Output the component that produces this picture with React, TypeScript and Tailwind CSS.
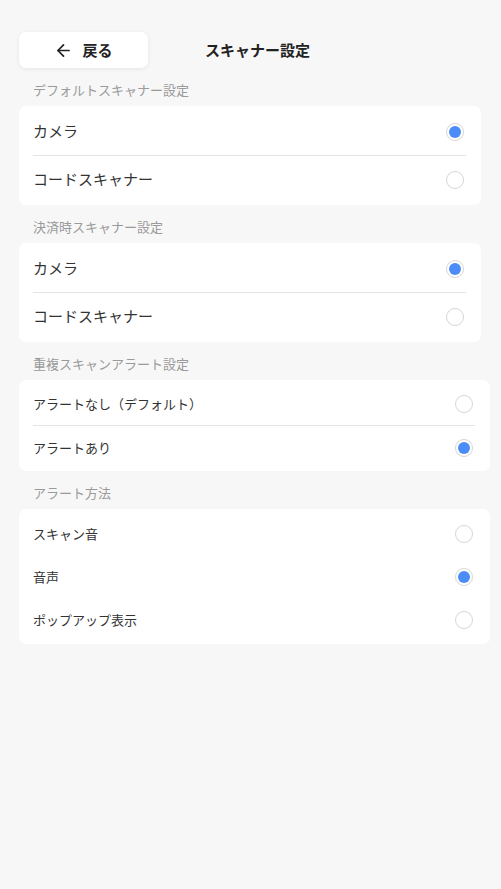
import React from "react";
import { ArrowLeft } from "lucide-react";

type Opt = { label: string; checked: boolean };

function Radio({ checked }: { checked: boolean }) {
  return (
    <div className="flex h-[18px] w-[18px] shrink-0 items-center justify-center rounded-full border border-[#d6d6d6] bg-white">
      {checked && <div className="h-[12px] w-[12px] rounded-full bg-[#4b8cf7]" />}
    </div>
  );
}

function Section({
  title,
  options,
  big,
  wide,
  dividers,
}: {
  title: string;
  options: Opt[];
  big: boolean;
  wide: boolean;
  dividers: boolean;
}) {
  return (
    <div className="flex flex-col">
      <div className="pt-[13px] pb-[7px] pl-[14px] text-[13px] leading-[18px] text-[#9a9a9a]">{title}</div>
      <div
        className={`flex flex-col rounded-[7px] bg-white ${dividers ? "py-[2px]" : "py-[3px]"} ${
          wide ? "w-[471px]" : "w-[462px]"
        }`}
      >
        {options.map((o, i) => (
          <React.Fragment key={o.label}>
            {i > 0 && dividers && <div className="ml-[14px] mr-[15px] h-px bg-[#e4e4e4]" />}
            <div
              className={`flex items-center justify-between pl-[14px] pr-[17px] ${
                big ? "h-[47px] text-[15px]" : "h-[43px] text-[13px]"
              } text-[#333]`}
            >
              <span>{o.label}</span>
              <Radio checked={o.checked} />
            </div>
          </React.Fragment>
        ))}
      </div>
    </div>
  );
}

export default function App() {
  return (
    <div
      className="min-h-[889px] w-full bg-[#f7f7f7] pl-[19px] pt-[32px]"
      style={{ fontFamily: '"Noto Sans CJK JP", "Noto Sans", sans-serif' }}
    >
      <div className="flex items-center">
        <button className="flex h-[36px] w-[129px] items-center justify-center gap-[9px] rounded-[7px] bg-white shadow-[0_1px_4px_rgba(0,0,0,0.08)]">
          <ArrowLeft size={19} strokeWidth={2.2} className="text-[#222]" />
          <span className="text-[15px] font-bold text-[#222]">戻る</span>
        </button>
        <div className="ml-[57px] text-[15px] font-bold text-[#222]">スキャナー設定</div>
      </div>
      <Section
        title="デフォルトスキャナー設定"
        big
        wide={false}
        dividers
        options={[
          { label: "カメラ", checked: true },
          { label: "コードスキャナー", checked: false },
        ]}
      />
      <Section
        title="決済時スキャナー設定"
        big
        wide={false}
        dividers
        options={[
          { label: "カメラ", checked: true },
          { label: "コードスキャナー", checked: false },
        ]}
      />
      <Section
        title="重複スキャンアラート設定"
        big={false}
        wide
        dividers
        options={[
          { label: "アラートなし（デフォルト）", checked: false },
          { label: "アラートあり", checked: true },
        ]}
      />
      <Section
        title="アラート方法"
        big={false}
        wide
        dividers={false}
        options={[
          { label: "スキャン音", checked: false },
          { label: "音声", checked: true },
          { label: "ポップアップ表示", checked: false },
        ]}
      />
    </div>
  );
}
